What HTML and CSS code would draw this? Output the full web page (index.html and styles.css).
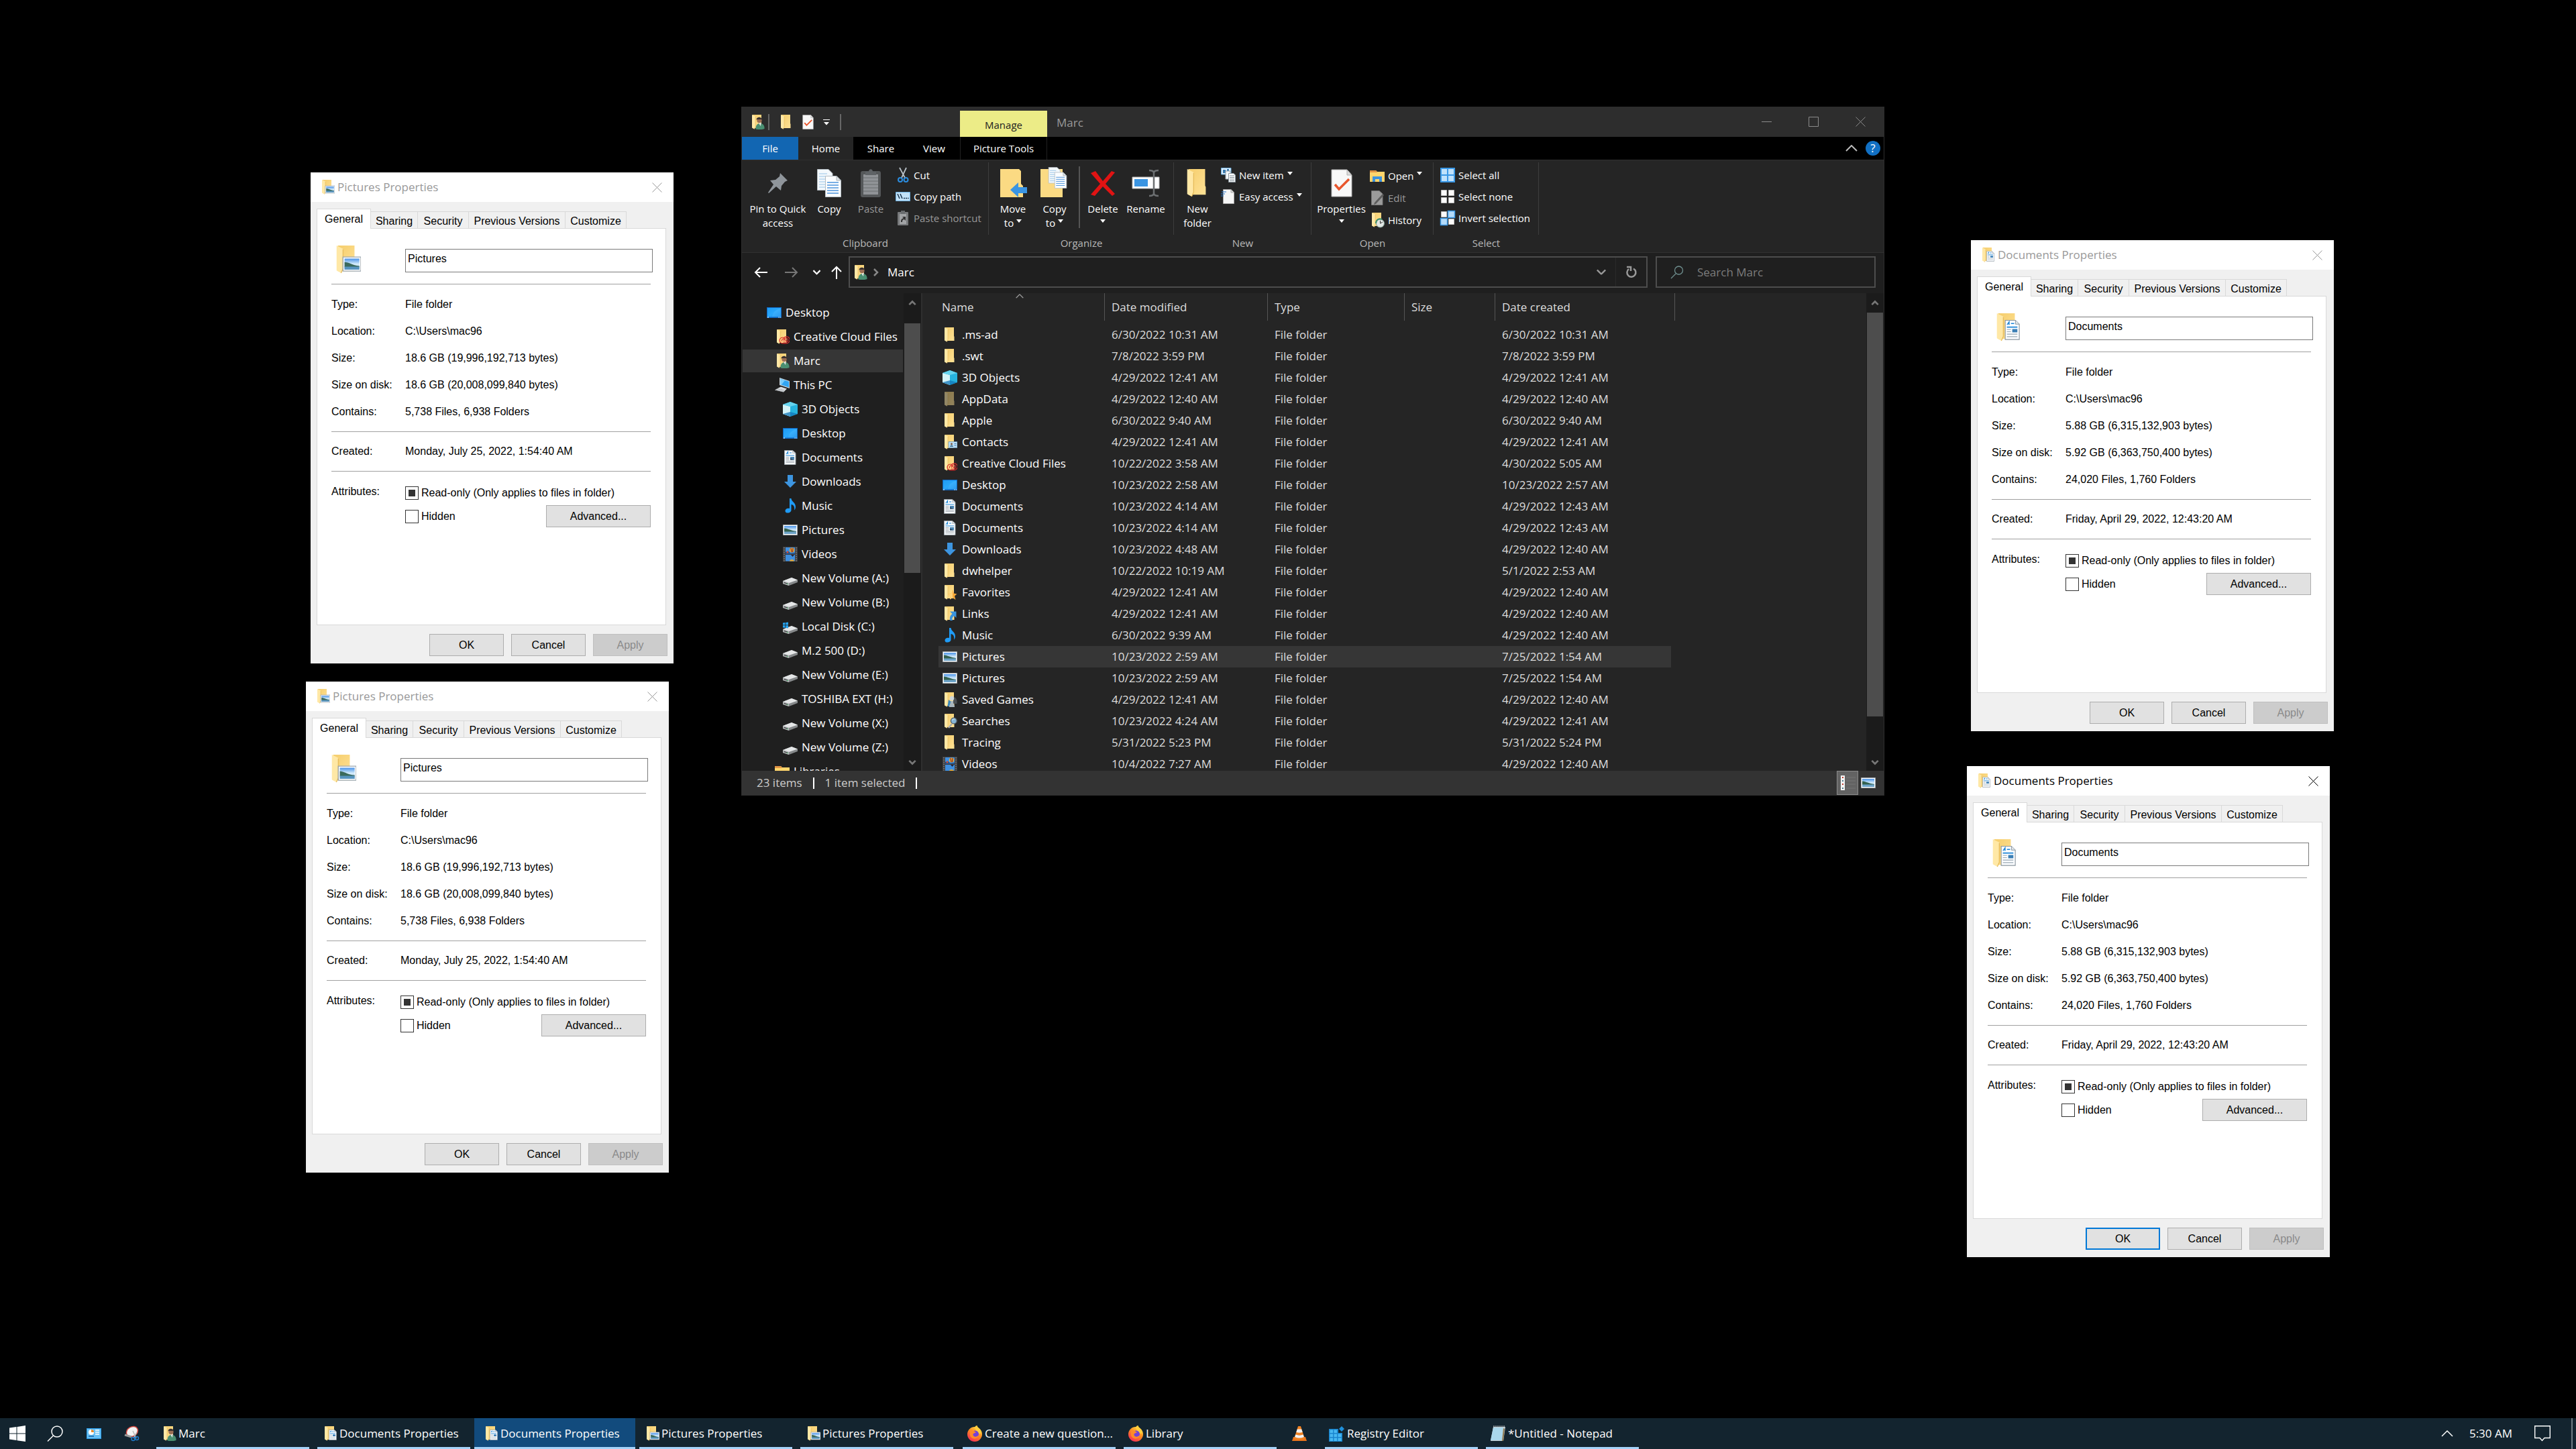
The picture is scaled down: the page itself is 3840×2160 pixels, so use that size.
FILE: index.html
```html
<!DOCTYPE html>
<html lang="en">
<head>
<meta charset="utf-8">
<title>Desktop</title>
<link rel="stylesheet" href="styles.css">
</head>
<body>
<svg class="defs" aria-hidden="true">
  <defs>
    <linearGradient id="g-sky" x1="0" y1="0" x2="0" y2="1"><stop offset="0" stop-color="#4a93e8"/><stop offset=".5" stop-color="#d5ecfb"/><stop offset="1" stop-color="#9cc4ea"/></linearGradient>
    <linearGradient id="g-desk" x1="0" y1="0" x2="1" y2="1"><stop offset="0" stop-color="#1e9bf5"/><stop offset=".5" stop-color="#2aa8fb"/><stop offset="1" stop-color="#1688e6"/></linearGradient>
    <linearGradient id="g-fold" x1="0" y1="0" x2="1" y2="1"><stop offset="0" stop-color="#f5cd6c"/><stop offset="1" stop-color="#ffe296"/></linearGradient>
    <linearGradient id="g-fox" x1=".8" y1="0" x2=".2" y2="1"><stop offset="0" stop-color="#ffe14a"/><stop offset=".45" stop-color="#ff8a1f"/><stop offset="1" stop-color="#f5255c"/></linearGradient>
  </defs>
  <symbol id="folder" viewBox="0 0 22 22"><path d="M4 0H17V13L17.500 14V20H4Z" fill="url(#g-fold)"/><path d="M3 0L8 2.500V18L6.500 21.500L3 19.500Z" fill="#ffe8a6"/><path d="M8 3V18L6.500 21.500" fill="none" stroke="#e3b856" stroke-width=".6"/></symbol>
  <symbol id="o-picture" viewBox="0 0 22 22"><path d="M8 9H22V20H8Z" fill="#fff" stroke="#9aa5ad" stroke-width=".7"/><path d="M9.200 10.200H20.800V18.800H9.200Z" fill="url(#g-sky)"/><path d="M9.200 13C13 13 15 15.500 20.800 16V17H9.200Z" fill="#3b6a5c"/><path d="M9.200 16.500H20.800V18.800H9.200Z" fill="#5794bf"/></symbol>
  <symbol id="o-doc" viewBox="0 0 22 22"><path d="M9.500 5.500H17.500L20.500 8.500V20.500H9.500Z" fill="#fbfdff" stroke="#8b969f" stroke-width=".6"/><path d="M17.500 5.500V8.500H20.500" fill="#dfe5ea" stroke="#8b969f" stroke-width=".5"/><path d="M11 9L12.500 6.800V9M14 8H16.500M10.800 10.800H19" stroke="#1b84d6" stroke-width=".8" fill="none"/><path d="M10.800 12.700H14M10.800 14.400H14M10.800 16.300H19M10.800 18.300H19" stroke="#9aa8b4" stroke-width=".6"/><path d="M15 12.300H19V14.900H15Z" fill="#3c7fb5"/></symbol>
  <symbol id="f-picture" viewBox="0 0 22 22"><use href="#folder"/><use href="#o-picture"/></symbol>
  <symbol id="f-doc" viewBox="0 0 22 22"><use href="#folder"/><use href="#o-doc"/></symbol>
  <symbol id="f-user" viewBox="0 0 22 22"><use href="#folder"/><path d="M8.500 21.500C8 15 12 13 15 13C19 13 22 16 21.500 21C19 22.500 12 22.500 8.500 21.500Z" fill="#4a8f72"/><path d="M13 12L16.500 12L16 17L14.500 15Z" fill="#e8e8e8"/><circle cx="14" cy="8.500" r="3.700" fill="#9c6f55"/><path d="M9.500 7.500C9.500 2.500 18.500 2.500 18 8.500L17 6.800C14 7.500 12 6.500 9.500 7.500Z" fill="#3a3230"/></symbol>
  <symbol id="f-cloud" viewBox="0 0 22 22"><use href="#folder"/><g fill="none" stroke="#d92a2a" stroke-width="1.200"><path d="M12 20.800A4.400 4.400 0 1 1 13.500 12.500A5 5 0 1 1 17 20.800Z"/><path d="M11 18A2.500 2.500 0 0 1 15 15L18.500 18.500"/><path d="M14 17.500A3 3 0 1 1 17 19H12.500"/></g></symbol>
  <symbol id="f-contact" viewBox="0 0 22 22"><use href="#folder"/><path d="M9 10.500H22V19.500H9Z" fill="#bfe0f5" stroke="#6c9cbd" stroke-width=".8"/><path d="M11 18C11 14.500 16 14.500 16 18Z" fill="#467a9c"/><circle cx="13.500" cy="13.700" r="1.500" fill="#7a5a46"/><path d="M17.500 13.500H20.500M17.500 16H20.500" stroke="#3d7cb0"/></symbol>
  <symbol id="f-star" viewBox="0 0 22 22"><use href="#folder"/><path d="M15 7L16.800 12.500L21.500 13.500L18 16.500L19.500 22L15 19L11 21.500L11.800 16.500L8 13L13.200 12.500Z" fill="#f7a83a"/><path d="M15 7L15 19L11 21.500L11.800 16.500L8 13L13.200 12.500Z" fill="#ffd27a"/></symbol>
  <symbol id="f-link" viewBox="0 0 22 22"><use href="#folder"/><path d="M11 7.500H20.500V17L17.500 14C14.500 16 14 18 15 21H11.500C10 16.500 11.500 13.500 14.500 11Z" fill="#3a95df"/></symbol>
  <symbol id="f-game" viewBox="0 0 22 22"><use href="#folder"/><path d="M16 7C21 7 22 13 21.500 17H16Z" fill="#4b4f52"/><path d="M9 11L13 14L10 21H7.500Z" fill="#3a87ba"/><path d="M10 22C9.500 19 12.500 18 12 13H16C15.500 18 18.500 19 18 22Z" fill="#a9b6bd"/><circle cx="14" cy="9" r="3.200" fill="#ccd6da"/></symbol>
  <symbol id="f-search" viewBox="0 0 22 22"><use href="#folder"/><path d="M14 15L9 21" stroke="#a9adb0" stroke-width="2.400"/><circle cx="16.800" cy="10.500" r="4.400" fill="#86b5d6" stroke="#55646e" stroke-width="1.400"/><path d="M14.500 10C15 8 17 7.500 18.500 8" stroke="#d7ecfa" fill="none"/></symbol>
  <symbol id="cube" viewBox="0 0 22 22"><path d="M11 0L22 4V18L11 22L0 18V4Z" fill="#27b3de"/><path d="M0 4L11 7V22L0 18Z" fill="#d4f3f8"/><path d="M11 0L22 4L11 7L0 4Z" fill="#65d3ee"/><path d="M0 18L11 15L22 18L11 22Z" fill="#1175b8" opacity=".75"/></symbol>
  <symbol id="desktop" viewBox="0 0 22 22"><path d="M0 3H22V19H0Z" fill="#0f66c0"/><path d="M1 4H21V17.500H1Z" fill="url(#g-desk)"/><path d="M8 17C9 10 14 6 21 5V17Z" fill="#55bdff" opacity=".35"/><path d="M1 18H3M17.500 18H19M20 18H21" stroke="#fff"/></symbol>
  <symbol id="doc" viewBox="0 0 22 22"><path d="M2.500 .5H14.500L19 4.500V21.500H2.500Z" fill="#f8fbfd" stroke="#9ba3a9"/><path d="M14.500 .5V4.500H19Z" fill="#dde3e8" stroke="#9ba3a9" stroke-width=".6"/><path d="M5 6L7.500 2.500V6M10 4H13M4.500 8H17" stroke="#1d88d8" fill="none" stroke-width="1.200"/><path d="M4.500 10.500H9.500M4.500 12.500H9.500M4.500 14.500H9.500M4.500 16.500H17M4.500 18.500H17" stroke="#9099a0" stroke-width=".8"/><path d="M11 10H17V14.500H11Z" fill="#4a86b4"/><path d="M11 12L17 14.500H11Z" fill="#253f57"/></symbol>
  <symbol id="download" viewBox="0 0 22 22"><path d="M7 1H15V11H20L11 20L2 11H7Z" fill="#3d95e0"/></symbol>
  <symbol id="music" viewBox="0 0 22 22"><path d="M10 0H12.500C13 5 19 6 19 12.500C19 15 18 16.500 17 17.500C18 12 15.500 9.500 12.500 9V17.500C12.500 22 3.500 23.500 3.500 18.500C3.500 15 7.500 14 10 15Z" fill="#1f9bf5"/></symbol>
  <symbol id="picture" viewBox="0 0 22 22"><path d="M.5 3.500H21.500V18.500H.5Z" fill="#fff" stroke="#a4abb0"/><path d="M2 5H20V17H2Z" fill="url(#g-sky)"/><path d="M2 8.500C8 9 12 12 20 13V14H2Z" fill="#33614f"/><path d="M2 13.500H20V17H2Z" fill="#6da3c8"/></symbol>
  <symbol id="video" viewBox="0 0 22 22"><path d="M0 0H22V22H0Z" fill="#3f3f41"/><path d="M4 1H18V10.500H4ZM4 12H18V21.500H4Z" fill="#3f8fdf"/><path d="M4 8L8 6.500L11 9.500L18 9V10.500H4Z" fill="#1c4f8d"/><circle cx="13.500" cy="5" r="3.600" fill="#e8ab35"/><path d="M12 2L13 8M15 2L14.500 8" stroke="#8e2d25" stroke-width="1.200"/><circle cx="7" cy="8" r="1.500" fill="#e04e2f"/><path d="M10 21.500C10 18 17 18 17 21.500Z" fill="#e8ab35"/><path d="M12 12H17L14.500 15Z" fill="#2a2430"/><path d="M2 1V22M20 1V22" stroke="#8a8a8a" stroke-width="1.400" stroke-dasharray="1.500 1.700"/></symbol>
  <symbol id="drive" viewBox="0 0 22 22"><path d="M0 15L13 10L22 13.500V17L9 22L0 19Z" fill="#85888a"/><path d="M0 15L13 10L22 13.500L9 18Z" fill="#e4e6e7"/><path d="M0 15L9 18V22L0 19Z" fill="#b7babb"/><path d="M1.500 16.700L7.500 18.700V20L1.500 18Z" fill="#34383a"/><path d="M6 19h1.500v1H6Z" fill="#3fbf65"/></symbol>
  <symbol id="drive-c" viewBox="0 0 22 22"><use href="#drive"/><path d="M0 5.500L3.500 5V8.500H0ZM4.300 5L8 4.500V8.500H4.300ZM0 9.300H3.500V13L0 12.500ZM4.300 9.300H8V13.500L4.300 13Z" fill="#27a5f2"/></symbol>
  <symbol id="pc" viewBox="0 0 22 22"><path d="M7 0L22 5V16L7 11Z" fill="#c8d3da"/><path d="M8 1.500L21 5.800V14.500L8 10Z" fill="#31a5f3"/><path d="M8 1.500L15 4L10 10.500L8 10Z" fill="#7cccfa"/><path d="M4 16L9 13.500L18 16.500L13 21.500L0 18.500Z" fill="#dadde0"/><path d="M2 18L13 21M4 16.500L14 19" stroke="#868c91" stroke-dasharray="1.500 1"/></symbol>
  <symbol id="library" viewBox="0 0 22 22"><path d="M0 3H9L11 5H22V20H0Z" fill="#ffd56c"/><path d="M0 3H9L11 6H0Z" fill="#e09345"/><path d="M4 12H18V20H14V16H8V20H4Z" fill="#3c92dd"/></symbol>
  <symbol id="check-doc" viewBox="0 0 32 42"><path d="M1 1H24L31 9V41H1Z" fill="#f8f8f8" stroke="#b8b8b8"/><path d="M24 1V9H31Z" fill="#ddd" stroke="#b0b0b0"/><path d="M6 23L12 30L27 15" fill="none" stroke="#e8562d" stroke-width="3.500"/></symbol>
  <symbol id="pages" viewBox="0 0 36 42"><path d="M.5 .5H17L23 6.500V31.500H.5Z" fill="#f3f8fc" stroke="#b4bcc2"/><path d="M3 7H15M3 11H20M3 15H20M3 19H20M3 23H20M3 27H20" stroke="#98c4e6" stroke-width="1.200"/><path d="M12.500 10.500H29L35.500 17V41.500H12.500Z" fill="#fbfdff" stroke="#b4bcc2"/><path d="M29 10.500V17H35.500Z" fill="#dde4e9" stroke="#a9b1b6"/><path d="M15 20H32M15 24H32M15 28H32M15 32H32M15 36H32" stroke="#4d94db" stroke-width="1.300"/></symbol>
  <symbol id="caret" viewBox="0 0 8 5"><path d="M0 0H8L4 5Z" fill="#fff"/></symbol>
  <symbol id="close" viewBox="0 0 15 15"><path d="M.5 .5L14.500 14.500M14.500 .5L.5 14.500" stroke="currentColor" fill="none"/></symbol>
  <symbol id="chev-up" viewBox="0 0 18 10"><path d="M1 9L9 1L17 9" stroke="currentColor" stroke-width="2" fill="none"/></symbol>
  <symbol id="chev-down" viewBox="0 0 18 10"><path d="M1 1L9 9L17 1" stroke="currentColor" stroke-width="3" fill="none"/></symbol>
  <symbol id="firefox" viewBox="0 0 24 24"><circle cx="12" cy="13" r="11" fill="url(#g-fox)"/><path d="M12 3C13 0 15 0 15.500 0C16 3 21 5 22 10C20 16 14 8 12 3Z" fill="#ffcf3f"/><circle cx="12.500" cy="13" r="5.500" fill="#7341d8"/><path d="M5 7C9 6 11 9 14 10C12 12 9 11 9.500 14C10 17 15 18 18 14C17 22 6 21 5 14Z" fill="#ff8b28"/></symbol>
</svg>

<main class="desktop">

  <section class="explorer" aria-label="File Explorer">
    <header class="titlebar">
      <div class="qat">
        <svg class="i22"><use href="#f-user"/></svg><span class="qsep"></span>
        <svg class="i22"><use href="#folder"/></svg>
        <svg class="qdoc"><use href="#check-doc"/></svg>
        <svg class="qmenu" viewBox="0 0 10 9"><path d="M0 .5H10" stroke="#fff"/><path d="M1 4H9L5 8.500Z" fill="#fff"/></svg>
        <span class="qsep last"></span>
      </div>
      <span class="manage">Manage</span>
      <h1 class="win-title">Marc</h1>
      <div class="win-controls">
        <button aria-label="Minimize"><svg viewBox="0 0 15 15"><path d="M0 7.500H15" stroke="currentColor"/></svg></button>
        <button aria-label="Maximize"><svg viewBox="0 0 15 15"><path d="M.5 .5H14.500V14.500H.5Z" stroke="currentColor" fill="none"/></svg></button>
        <button aria-label="Close"><svg><use href="#close"/></svg></button>
      </div>
    </header>

    <nav class="ribbon-tabs" aria-label="Ribbon tabs">
      <button class="tab-file">File</button>
      <button class="tab-home">Home</button>
      <button class="tab-share">Share</button>
      <button class="tab-view">View</button>
      <button class="tab-tools">Picture Tools</button>
      <button class="collapse" aria-label="Minimize the Ribbon"><svg viewBox="0 0 18 10"><use href="#chev-up"/></svg></button>
      <button class="help" aria-label="Help">?</button>
    </nav>

    <div class="ribbon">
      <div class="group g-clip">
        <div class="tools">
          <button class="big w96"><svg viewBox="0 0 42 42"><path d="M24 6L35 17L31 19L26 25L25 32L18 26L7 36L6 35L14 23L9 17L17 16L23 11Z" fill="#8f959b"/></svg>Pin to Quick<br>access</button>
          <button class="big w56"><svg><use href="#pages"/></svg>Copy</button>
          <button class="big w68 off"><svg viewBox="0 0 32 42"><rect x="1" y="3" width="30" height="39" rx="3" fill="#55585a"/><path d="M5 8H27V38H5Z" fill="#909397"/><path d="M5 13H27M5 18H27M5 23H27M5 28H27M5 33H27" stroke="#6b6e71"/><path d="M8 9V4H13C13-1 19-1 19 4H24V9Z" fill="#5f6366"/></svg>Paste</button>
          <div class="small-col">
            <button class="small"><svg viewBox="0 0 22 22"><path d="M6 0L14 15M16 0L9 15" stroke="#b9c2c9" stroke-width="1.800"/><circle cx="7" cy="18" r="3" fill="none" stroke="#2b8de0" stroke-width="2"/><circle cx="15.500" cy="18" r="3" fill="none" stroke="#2b8de0" stroke-width="2"/></svg>Cut</button>
            <button class="small"><svg viewBox="0 0 22 22"><path d="M.5 4.500H21.500V17.500H.5Z" fill="#c3e2f8" stroke="#6eb1e1"/><path d="M3 7L6 14M7 7L10 14M12 13.500H14M15 13.500H17M18 13.500H19.500" stroke="#173149" stroke-width="1.500"/></svg>Copy path</button>
            <button class="small off"><svg viewBox="0 0 22 22"><rect x="3" y="2" width="16" height="20" rx="1" fill="#77797b"/><path d="M6 5H16V20H6Z" fill="#a2a4a6"/><path d="M8 0H14V5H8Z" fill="#696c6e"/><path d="M8 17C8 12 10 12 12 11L10 9H15V15L13 13C11 13 10 14 10 17Z" fill="#333"/></svg>Paste shortcut</button>
          </div>
        </div>
        <h2>Clipboard</h2>
      </div>
      <div class="group g-org">
        <div class="tools">
          <button class="big w62"><svg viewBox="-2 0 42 42"><path d="M0 0H28L31 3V22L34 25V42H0Z" fill="#fbda83"/><path d="M15 31L27 20V27H40V36H27V42Z" fill="#3b95e2"/></svg>Move<span>to<svg class="car"><use href="#caret"/></svg></span></button>
          <button class="big w62"><svg viewBox="0 3 42 42"><path d="M0 3H33V45H0Z" fill="#fbda83"/><use href="#pages" x="11" y="0" width="29" height="32"/></svg>Copy<span>to<svg class="car"><use href="#caret"/></svg></span></button>
          <i class="vsep"></i>
          <button class="big w58"><svg viewBox="0 0 42 42"><path d="M3 6L10 3L21 18L34 3L39 5L25 22L39 37L35 40L21 26L9 40L3 38L17 22Z" fill="#e01313"/></svg>Delete<span><svg class="car solo"><use href="#caret"/></svg></span></button>
          <button class="big w70"><svg viewBox="0 0 42 42"><path d="M1 12H41V29H1Z" fill="#fdfdfd" stroke="#bbb"/><path d="M4 15H24V26H4Z" fill="#3b95e2"/><path d="M26 2C30 2 33 3 33 6V36C33 39 30 40 26 40M40 2C36 2 33 3 33 6M33 36C33 39 36 40 40 40" stroke="#6c6f71" stroke-width="2.500" fill="none"/></svg>Rename</button>
        </div>
        <h2>Organize</h2>
      </div>
      <div class="group g-new">
        <div class="tools">
          <button class="big w60"><svg viewBox="0 0 22 22"><use href="#folder"/></svg>New<br>folder</button>
          <div class="small-col inset">
            <button class="small"><svg viewBox="0 0 22 22"><path d="M.5 .5H15V10H.5Z" fill="#dff0fc" stroke="#6eb1e1"/><path d="M3 3H7V8H3ZM9 2H12V5H9Z" fill="#3b7cb0"/><path d="M7 5H14V17H7Z" fill="#f4f8fb" stroke="#98a4ad"/><path d="M11.500 8.500H19L21.500 11V21.500H11.500Z" fill="#fdfdfd" stroke="#8a969f"/><path d="M13 12H20M13 14.500H20M13 17H20M13 19.500H20" stroke="#7f8d97"/></svg>New item<svg class="car"><use href="#caret"/></svg></button>
            <button class="small"><svg viewBox="0 0 22 22"><path d="M3.500 .5H15L19.500 5V21.500H3.500Z" fill="#f6f6f6" stroke="#a8a8a8"/><path d="M15 .5V5H19.500" fill="#ddd" stroke="#a8a8a8"/><path d="M1 4H8M0 7H6M0 10H4" stroke="#2b7bd0" stroke-width="1.200"/></svg>Easy access<svg class="car"><use href="#caret"/></svg></button>
          </div>
        </div>
        <h2>New</h2>
      </div>
      <div class="group g-open">
        <div class="tools">
          <button class="big w80"><svg><use href="#check-doc"/></svg>Properties<span><svg class="car solo"><use href="#caret"/></svg></span></button>
          <div class="small-col loose">
            <button class="small"><svg><use href="#library"/></svg>Open<svg class="car"><use href="#caret"/></svg></button>
            <button class="small off"><svg viewBox="0 0 22 22"><path d="M2.500 .5H14L19 5V21.500H2.500Z" fill="#9b9b9b" stroke="#777"/><path d="M7 18L19 5L21 7L9 20L6 21Z" fill="#5c5c5c"/></svg>Edit</button>
            <button class="small"><svg viewBox="0 0 22 22"><use href="#folder"/><circle cx="15.500" cy="16" r="6" fill="#e1e6e4" stroke="#7f9b90"/><path d="M15.500 12V16L19 14" stroke="#333" fill="none"/><path d="M9 16C9 10 14 8 18 10" stroke="#3d8f6b" stroke-width="2" fill="none"/></svg>History</button>
          </div>
        </div>
        <h2>Open</h2>
      </div>
      <div class="group g-select">
        <div class="tools">
          <div class="small-col inset">
            <button class="small"><svg viewBox="0 0 22 22"><path d="M0 0H22V22H0Z" fill="#3a98e6"/><path d="M2 2H10V10H2ZM12 2H20V10H12ZM2 12H10V20H2ZM12 12H20V20H12Z" fill="#bfe1fb"/></svg>Select all</button>
            <button class="small"><svg viewBox="0 0 22 22"><path d="M1.500 1.500H9.500V9.500H1.500ZM12.500 1.500H20.500V9.500H12.500ZM1.500 12.500H9.500V20.500H1.500ZM12.500 12.500H20.500V20.500H12.500Z" fill="#fafafa" stroke="#bdbdbd"/></svg>Select none</button>
            <button class="small"><svg viewBox="0 0 22 22"><path d="M1.500 1.500H9.500V9.500H1.500ZM12.500 12.500H20.500V20.500H12.500Z" fill="#fafafa" stroke="#bdbdbd"/><path d="M11.500 .5H21.500V10.500H11.500ZM.5 11.500H10.500V21.500H.5Z" fill="#b4dbfa" stroke="#3a98e6" stroke-width="1.500"/></svg>Invert selection</button>
          </div>
        </div>
        <h2>Select</h2>
      </div>
    </div>

    <div class="address-row">
      <button aria-label="Back" class="nb"><svg viewBox="0 0 20 20"><path d="M20 10H2M9 3L2 10L9 17" fill="none" stroke="#fff" stroke-width="2"/></svg></button>
      <button aria-label="Forward" class="nb"><svg viewBox="0 0 20 20"><path d="M0 10H18M11 3L18 10L11 17" fill="none" stroke="#777" stroke-width="2"/></svg></button>
      <button aria-label="Recent locations" class="nb rec"><svg viewBox="0 0 18 10"><path d="M2 1L9 8L16 1" fill="none" stroke="#fff" stroke-width="3"/></svg></button>
      <button aria-label="Up" class="nb up"><svg viewBox="0 0 20 20"><path d="M10 20V2M3 9L10 2L17 9" fill="none" stroke="#fff" stroke-width="2"/></svg></button>
      <div class="address">
        <svg class="i22"><use href="#f-user"/></svg>
        <svg class="crumb" viewBox="0 0 8 12"><path d="M1 1L6 6L1 11" fill="none" stroke="#888" stroke-width="2.500"/></svg>
        <span>Marc</span>
        <button class="drop" aria-label="Previous locations"><svg viewBox="0 0 18 10"><use href="#chev-down"/></svg></button>
        <button class="refresh" aria-label="Refresh"><svg viewBox="0 0 18 18"><path d="M12 3.500A6.500 6.500 0 1 1 5 4" fill="none" stroke="#999" stroke-width="2.500"/><path d="M2 1H8V7" fill="none" stroke="#999" stroke-width="2.500"/></svg></button>
      </div>
      <label class="search">
        <svg viewBox="0 0 20 20"><circle cx="12.500" cy="7" r="6" fill="none" stroke="#6f8f8f" stroke-width="1.300"/><path d="M8 12L1 19" stroke="#6f8f8f" stroke-width="1.300"/></svg>
        <input type="search" placeholder="Search Marc" aria-label="Search Marc">
      </label>
    </div>

    <div class="panes">
      <div class="nav-pane">
        <ul class="tree">
          <li class="l0"><svg><use href="#desktop"/></svg>Desktop</li>
          <li class="l1"><svg><use href="#f-cloud"/></svg>Creative Cloud Files</li>
          <li class="l1 current"><svg><use href="#f-user"/></svg>Marc</li>
          <li class="l1"><svg><use href="#pc"/></svg>This PC</li>
          <li class="l2"><svg><use href="#cube"/></svg>3D Objects</li>
          <li class="l2"><svg><use href="#desktop"/></svg>Desktop</li>
          <li class="l2"><svg><use href="#doc"/></svg>Documents</li>
          <li class="l2"><svg><use href="#download"/></svg>Downloads</li>
          <li class="l2"><svg><use href="#music"/></svg>Music</li>
          <li class="l2"><svg><use href="#picture"/></svg>Pictures</li>
          <li class="l2"><svg><use href="#video"/></svg>Videos</li>
          <li class="l2"><svg><use href="#drive"/></svg>New Volume (A:)</li>
          <li class="l2"><svg><use href="#drive"/></svg>New Volume (B:)</li>
          <li class="l2"><svg><use href="#drive-c"/></svg>Local Disk (C:)</li>
          <li class="l2"><svg><use href="#drive"/></svg>M.2 500 (D:)</li>
          <li class="l2"><svg><use href="#drive"/></svg>New Volume (E:)</li>
          <li class="l2"><svg><use href="#drive"/></svg>TOSHIBA EXT (H:)</li>
          <li class="l2"><svg><use href="#drive"/></svg>New Volume (X:)</li>
          <li class="l2"><svg><use href="#drive"/></svg>New Volume (Z:)</li>
          <li class="l1"><svg><use href="#library"/></svg>Libraries</li>
        </ul>
        <div class="scroll nav-scroll"><svg viewBox="0 0 18 10"><path d="M2 9L9 2L16 9" stroke="#777" stroke-width="4" fill="none"/></svg><i></i><svg class="dn" viewBox="0 0 18 10"><path d="M2 1L9 8L16 1" stroke="#777" stroke-width="4" fill="none"/></svg></div>
      </div>
      <div class="list-pane">
        <table class="files">
          <colgroup><col class="c-name"><col class="c-mod"><col class="c-type"><col class="c-size"><col class="c-created"></colgroup>
          <thead><tr><th><span>Name<svg class="sort" viewBox="0 0 18 10"><use href="#chev-up"/></svg></span></th><th><span>Date modified</span></th><th><span>Type</span></th><th><span>Size</span></th><th><span class="wide">Date created</span></th></tr></thead>
          <tbody>
            <tr><td><svg><use href="#folder"/></svg>.ms-ad</td><td>6/30/2022 10:31 AM</td><td>File folder</td><td></td><td>6/30/2022 10:31 AM</td></tr>
            <tr><td><svg><use href="#folder"/></svg>.swt</td><td>7/8/2022 3:59 PM</td><td>File folder</td><td></td><td>7/8/2022 3:59 PM</td></tr>
            <tr><td><svg><use href="#cube"/></svg>3D Objects</td><td>4/29/2022 12:41 AM</td><td>File folder</td><td></td><td>4/29/2022 12:41 AM</td></tr>
            <tr><td><svg class="faded"><use href="#folder"/></svg>AppData</td><td>4/29/2022 12:40 AM</td><td>File folder</td><td></td><td>4/29/2022 12:40 AM</td></tr>
            <tr><td><svg><use href="#folder"/></svg>Apple</td><td>6/30/2022 9:40 AM</td><td>File folder</td><td></td><td>6/30/2022 9:40 AM</td></tr>
            <tr><td><svg><use href="#f-contact"/></svg>Contacts</td><td>4/29/2022 12:41 AM</td><td>File folder</td><td></td><td>4/29/2022 12:41 AM</td></tr>
            <tr><td><svg><use href="#f-cloud"/></svg>Creative Cloud Files</td><td>10/22/2022 3:58 AM</td><td>File folder</td><td></td><td>4/30/2022 5:05 AM</td></tr>
            <tr><td><svg><use href="#desktop"/></svg>Desktop</td><td>10/23/2022 2:58 AM</td><td>File folder</td><td></td><td>10/23/2022 2:57 AM</td></tr>
            <tr><td><svg><use href="#doc"/></svg>Documents</td><td>10/23/2022 4:14 AM</td><td>File folder</td><td></td><td>4/29/2022 12:43 AM</td></tr>
            <tr><td><svg><use href="#doc"/></svg>Documents</td><td>10/23/2022 4:14 AM</td><td>File folder</td><td></td><td>4/29/2022 12:43 AM</td></tr>
            <tr><td><svg><use href="#download"/></svg>Downloads</td><td>10/23/2022 4:48 AM</td><td>File folder</td><td></td><td>4/29/2022 12:40 AM</td></tr>
            <tr><td><svg><use href="#folder"/></svg>dwhelper</td><td>10/22/2022 10:19 AM</td><td>File folder</td><td></td><td>5/1/2022 2:53 AM</td></tr>
            <tr><td><svg><use href="#f-star"/></svg>Favorites</td><td>4/29/2022 12:41 AM</td><td>File folder</td><td></td><td>4/29/2022 12:40 AM</td></tr>
            <tr><td><svg><use href="#f-link"/></svg>Links</td><td>4/29/2022 12:41 AM</td><td>File folder</td><td></td><td>4/29/2022 12:40 AM</td></tr>
            <tr><td><svg><use href="#music"/></svg>Music</td><td>6/30/2022 9:39 AM</td><td>File folder</td><td></td><td>4/29/2022 12:40 AM</td></tr>
            <tr class="selected"><td><svg><use href="#picture"/></svg>Pictures</td><td>10/23/2022 2:59 AM</td><td>File folder</td><td></td><td>7/25/2022 1:54 AM</td></tr>
            <tr><td><svg><use href="#picture"/></svg>Pictures</td><td>10/23/2022 2:59 AM</td><td>File folder</td><td></td><td>7/25/2022 1:54 AM</td></tr>
            <tr><td><svg><use href="#f-game"/></svg>Saved Games</td><td>4/29/2022 12:41 AM</td><td>File folder</td><td></td><td>4/29/2022 12:40 AM</td></tr>
            <tr><td><svg><use href="#f-search"/></svg>Searches</td><td>10/23/2022 4:24 AM</td><td>File folder</td><td></td><td>4/29/2022 12:41 AM</td></tr>
            <tr><td><svg><use href="#folder"/></svg>Tracing</td><td>5/31/2022 5:23 PM</td><td>File folder</td><td></td><td>5/31/2022 5:24 PM</td></tr>
            <tr><td><svg><use href="#video"/></svg>Videos</td><td>10/4/2022 7:27 AM</td><td>File folder</td><td></td><td>4/29/2022 12:40 AM</td></tr>
          </tbody>
        </table>
        <div class="scroll list-scroll"><svg viewBox="0 0 18 10"><path d="M2 9L9 2L16 9" stroke="#777" stroke-width="4" fill="none"/></svg><i></i><svg class="dn" viewBox="0 0 18 10"><path d="M2 1L9 8L16 1" stroke="#777" stroke-width="4" fill="none"/></svg></div>
      </div>
    </div>

    <footer class="status">
      <span>23 items</span><i></i><span>1 item selected</span><i></i>
      <div class="views">
        <button class="on" aria-label="Details view"><svg viewBox="0 0 32 34"><path d="M6 6H12V28H6Z" fill="#f3f3f3"/><path d="M8 9H10M8 19H10" stroke="#c03a2b" stroke-width="2"/><path d="M8 14H10M8 25H10" stroke="#4b7a8c" stroke-width="2"/><path d="M14 9H28M14 14H28M14 19H28M14 25H28" stroke="#777"/></svg></button>
        <button aria-label="Large icons view"><svg class="i22"><use href="#picture"/></svg></button>
      </div>
    </footer>
  </section>

  <section class="dialog d1">
    <header><svg class="i22"><use href="#f-picture"/></svg><h2>Pictures Properties</h2><button class="x" aria-label="Close"><svg><use href="#close"/></svg></button></header>
    <div class="tabs"><button class="on">General</button><button class="t-sh">Sharing</button><button class="t-se">Security</button><button class="t-pv">Previous Versions</button><button class="t-cu">Customize</button></div>
    <div class="page">
      <div class="name-row"><svg><use href="#f-picture"/></svg><input type="text" value="Pictures" aria-label="Folder name"></div>
      <dl><dt>Type:</dt><dd>File folder</dd><dt>Location:</dt><dd>C:\Users\mac96</dd><dt>Size:</dt><dd>18.6 GB (19,996,192,713 bytes)</dd><dt>Size on disk:</dt><dd>18.6 GB (20,008,099,840 bytes)</dd><dt>Contains:</dt><dd>5,738 Files, 6,938 Folders</dd></dl>
      <dl><dt>Created:</dt><dd>Monday, July 25, 2022, 1:54:40 AM</dd></dl>
      <div class="attrs"><span>Attributes:</span><div><label><input type="checkbox" class="partial">Read-only (Only applies to files in folder)</label><div class="hid"><label><input type="checkbox">Hidden</label><button class="btn adv">Advanced...</button></div></div></div>
    </div>
    <footer><button class="btn">OK</button><button class="btn">Cancel</button><button class="btn" disabled>Apply</button></footer>
  </section>

  <section class="dialog d2">
    <header><svg class="i22"><use href="#f-picture"/></svg><h2>Pictures Properties</h2><button class="x" aria-label="Close"><svg><use href="#close"/></svg></button></header>
    <div class="tabs"><button class="on">General</button><button class="t-sh">Sharing</button><button class="t-se">Security</button><button class="t-pv">Previous Versions</button><button class="t-cu">Customize</button></div>
    <div class="page">
      <div class="name-row"><svg><use href="#f-picture"/></svg><input type="text" value="Pictures" aria-label="Folder name"></div>
      <dl><dt>Type:</dt><dd>File folder</dd><dt>Location:</dt><dd>C:\Users\mac96</dd><dt>Size:</dt><dd>18.6 GB (19,996,192,713 bytes)</dd><dt>Size on disk:</dt><dd>18.6 GB (20,008,099,840 bytes)</dd><dt>Contains:</dt><dd>5,738 Files, 6,938 Folders</dd></dl>
      <dl><dt>Created:</dt><dd>Monday, July 25, 2022, 1:54:40 AM</dd></dl>
      <div class="attrs"><span>Attributes:</span><div><label><input type="checkbox" class="partial">Read-only (Only applies to files in folder)</label><div class="hid"><label><input type="checkbox">Hidden</label><button class="btn adv">Advanced...</button></div></div></div>
    </div>
    <footer><button class="btn">OK</button><button class="btn">Cancel</button><button class="btn" disabled>Apply</button></footer>
  </section>

  <section class="dialog d3">
    <header><svg class="i22"><use href="#f-doc"/></svg><h2>Documents Properties</h2><button class="x" aria-label="Close"><svg><use href="#close"/></svg></button></header>
    <div class="tabs"><button class="on">General</button><button class="t-sh">Sharing</button><button class="t-se">Security</button><button class="t-pv">Previous Versions</button><button class="t-cu">Customize</button></div>
    <div class="page">
      <div class="name-row"><svg><use href="#f-doc"/></svg><input type="text" value="Documents" aria-label="Folder name"></div>
      <dl><dt>Type:</dt><dd>File folder</dd><dt>Location:</dt><dd>C:\Users\mac96</dd><dt>Size:</dt><dd>5.88 GB (6,315,132,903 bytes)</dd><dt>Size on disk:</dt><dd>5.92 GB (6,363,750,400 bytes)</dd><dt>Contains:</dt><dd>24,020 Files, 1,760 Folders</dd></dl>
      <dl><dt>Created:</dt><dd>Friday, April 29, 2022, 12:43:20 AM</dd></dl>
      <div class="attrs"><span>Attributes:</span><div><label><input type="checkbox" class="partial">Read-only (Only applies to files in folder)</label><div class="hid"><label><input type="checkbox">Hidden</label><button class="btn adv">Advanced...</button></div></div></div>
    </div>
    <footer><button class="btn">OK</button><button class="btn">Cancel</button><button class="btn" disabled>Apply</button></footer>
  </section>

  <section class="dialog d4 active">
    <header><svg class="i22"><use href="#f-doc"/></svg><h2>Documents Properties</h2><button class="x" aria-label="Close"><svg><use href="#close"/></svg></button></header>
    <div class="tabs"><button class="on">General</button><button class="t-sh">Sharing</button><button class="t-se">Security</button><button class="t-pv">Previous Versions</button><button class="t-cu">Customize</button></div>
    <div class="page">
      <div class="name-row"><svg><use href="#f-doc"/></svg><input type="text" value="Documents" aria-label="Folder name"></div>
      <dl><dt>Type:</dt><dd>File folder</dd><dt>Location:</dt><dd>C:\Users\mac96</dd><dt>Size:</dt><dd>5.88 GB (6,315,132,903 bytes)</dd><dt>Size on disk:</dt><dd>5.92 GB (6,363,750,400 bytes)</dd><dt>Contains:</dt><dd>24,020 Files, 1,760 Folders</dd></dl>
      <dl><dt>Created:</dt><dd>Friday, April 29, 2022, 12:43:20 AM</dd></dl>
      <div class="attrs"><span>Attributes:</span><div><label><input type="checkbox" class="partial">Read-only (Only applies to files in folder)</label><div class="hid"><label><input type="checkbox">Hidden</label><button class="btn adv">Advanced...</button></div></div></div>
    </div>
    <footer><button class="btn default">OK</button><button class="btn">Cancel</button><button class="btn" disabled>Apply</button></footer>
  </section>
</main>

<footer class="taskbar">
  <button class="pin" aria-label="Start"><svg viewBox="0 0 24 24"><path d="M0 3.500L10.500 2V11.500H0ZM11.500 1.900L24 0V11.500H11.500ZM0 12.500H10.500V22L0 20.500ZM11.500 12.500H24V24L11.500 22.200Z" fill="#fff"/></svg></button>
  <button class="pin" aria-label="Search"><svg viewBox="0 0 24 24"><circle cx="15" cy="9" r="8" fill="none" stroke="#fff" stroke-width="1.500"/><path d="M9.500 15L1 23.500" stroke="#fff" stroke-width="1.500"/></svg></button>
  <button class="pin" aria-label="Control Panel"><svg viewBox="0 0 24 24"><path d="M1 4H23V20H1Z" fill="#2d9de8"/><path d="M2 5H22V19H2Z" fill="#67c0f5"/><circle cx="8" cy="10" r="4" fill="#fff"/><path d="M8 10V6A4 4 0 0 1 12 10Z" fill="#e78b2d"/><path d="M14 7H20M14 10H20M14 13H20" stroke="#fff" stroke-width="1.500"/><path d="M4 16H12" stroke="#1463a8" stroke-width="1.500"/></svg></button>
  <button class="pin" aria-label="Snipping Tool"><svg viewBox="0 0 24 24"><ellipse cx="13" cy="9" rx="9" ry="7" transform="rotate(-30 13 9)" fill="#f3f3f3" stroke="#d5453c" stroke-width="1.500"/><path d="M2 14L12 17" stroke="#999" stroke-width="3"/><path d="M14 8L19 19M20 10L15 19" stroke="#bbb" stroke-width="1.500"/><circle cx="14.500" cy="20" r="2.500" fill="none" stroke="#1e78c8" stroke-width="1.500"/><circle cx="20" cy="19" r="2.500" fill="none" stroke="#1e78c8" stroke-width="1.500"/></svg></button>
  <button class="task"><svg><use href="#f-user"/></svg>Marc</button>
  <button class="task"><svg><use href="#f-doc"/></svg>Documents Properties</button>
  <button class="task current"><svg><use href="#f-doc"/></svg>Documents Properties</button>
  <button class="task"><svg><use href="#f-picture"/></svg>Pictures Properties</button>
  <button class="task"><svg><use href="#f-picture"/></svg>Pictures Properties</button>
  <button class="task tight"><svg><use href="#firefox"/></svg>Create a new question...</button>
  <button class="task tight"><svg><use href="#firefox"/></svg>Library</button>
  <button class="pin vlc" aria-label="VLC media player"><svg viewBox="0 0 24 24"><path d="M3 17H21L23 23H1Z" fill="#e8731c"/><path d="M10 1H14L20 20C16 22 8 22 4 20Z" fill="#f08222"/><path d="M8.800 5.500H15.200L16.700 10C14 11 10 11 7.300 10ZM6.300 13.500C10 15 14 15 17.700 13.500L18.800 17C14 19 10 19 5.200 17Z" fill="#f2f2f2"/></svg></button>
  <button class="task tight"><svg viewBox="0 0 24 24"><path d="M0 5H14V11H20V24H0Z" fill="#1a86cf"/><path d="M1.500 6.500H6V11H1.500ZM7.500 6.500H12V11H7.500ZM1.500 12.500H6V17H1.500ZM7.500 12.500H12V17H7.500ZM13.500 12.500H18.500V17H13.500ZM1.500 18.500H6V23H1.500ZM7.500 18.500H12V23H7.500ZM13.500 18.500H18.500V23H13.500Z" fill="#48b8f2"/><path d="M19 1L23 5L19 9L15 5Z" fill="#1f8fda"/></svg>Registry Editor</button>
  <button class="task tight"><svg viewBox="0 0 24 24"><path d="M5 2H23L20 23H1Z" fill="#c4cdd2"/><path d="M5 3H20L18 22H1Z" fill="#a9d7ec"/><path d="M6 2V0M9 2V0M12 2V0M15 2V0M18 2V0M21 2V0" stroke="#ddd"/><path d="M20 4L22 5L20 23H18Z" fill="#8c7a53"/></svg>*Untitled - Notepad</button>
  <div class="tray">
    <button class="more" aria-label="Show hidden icons"><svg viewBox="0 0 18 10"><path d="M1 9L9 1L17 9" fill="none" stroke="#fff" stroke-width="1.500"/></svg></button>
    <time>5:30 AM</time>
    <button class="notes" aria-label="Notifications"><svg viewBox="0 0 24 24"><path d="M.7 .7H23.300V18.500H15L11.500 22.500L8 18.500H.7Z" fill="none" stroke="#fff" stroke-width="1.400"/></svg></button>
    <i></i>
  </div>
</footer>
</body>
</html>
```
FILE: styles.css
```css
* { box-sizing: border-box; margin: 0; padding: 0; }
body { min-height: 100vh; display: flex; flex-direction: column; background: #000; font: 17px/24px "Open Sans", "Noto Sans", sans-serif; color: #fff; }
button { font: inherit; color: inherit; background: none; border: 0; }
h1, h2 { font-size: inherit; font-weight: 400; }
svg { display: block; flex: none; overflow: visible; }
.defs { position: absolute; width: 0; height: 0; }
.i22 { width: 22px; height: 22px; }
.desktop { flex: 1; position: relative; overflow: hidden; }

/* File Explorer window */
.explorer { position: absolute; left: 1105px; top: 159px; width: 1704px; height: 1027px; display: flex; flex-direction: column; background: #1f1f1f; border: 1px solid #2e2e2e; border-top: 0; }
.titlebar { height: 45px; display: flex; background: #2d2d2d; }
.qat { width: 325px; display: flex; align-items: center; padding-left: 12px; }
.qsep { width: 2px; height: 24px; margin: 0 14px 0 5px; border: 1px solid #666; }
.qsep.last { margin: 0; }
.qdoc { width: 19px; height: 22px; margin-left: 12px; }
.qmenu { width: 10px; height: 9px; margin: 2px 15px 0 13px; }
.manage { width: 130px; margin-top: 6px; background: #ecec87; color: #222; text-align: center; font-size: 15px; line-height: 43px; }
.win-title { padding-left: 14px; line-height: 48px; color: #999; flex: 1; }
.win-controls { display: flex; color: #8b8b8b; }
.win-controls button { width: 70px; display: flex; align-items: center; justify-content: center; }
.win-controls svg { width: 15px; height: 15px; }

.ribbon-tabs { height: 34px; display: flex; background: #000; font-size: 15px; }
.ribbon-tabs button { line-height: 34px; }
.tab-file { width: 84px; background: #1266b2; }
.tab-home { width: 82px; background: #252525; }
.tab-share { width: 82px; }
.tab-view { width: 77px; }
.tab-tools { width: 130px; border: solid #202020; border-width: 0 1px; }
.ribbon-tabs .collapse { margin-left: auto; width: 40px; display: flex; align-items: center; justify-content: center; color: #bbb; }
.collapse svg { width: 18px; height: 10px; }
.ribbon-tabs .help { width: 22px; height: 22px; margin: 6px 5px 0 1px; border-radius: 50%; background: #1170c4; font-size: 17px; line-height: 22px; }

.ribbon { height: 139px; display: flex; background: #252525; border: solid #303030; border-width: 1px 0; font-size: 15px; }
.group { display: flex; flex-direction: column; position: relative; padding-top: 1px; }
.group::after { content: ""; position: absolute; right: 0; top: 3px; height: 108px; border-right: 1px solid #3d3d3d; }
.group h2 { text-align: center; line-height: 20px; color: #b8b8b8; }
.g-clip { width: 368px; }
.g-org { width: 276px; }
.g-new { width: 205px; }
.g-open { width: 182px; }
.g-select { width: 157px; }
.tools { height: 112px; display: flex; padding-left: 5px; }
.big { display: flex; flex-direction: column; align-items: center; padding-top: 12px; line-height: 21px; white-space: nowrap; }
.big > svg { width: 42px; height: 42px; margin-bottom: 7px; }
.big span { display: flex; align-items: center; height: 21px; }
.off { color: #999; }
.w96 { width: 97px; } .w56 { width: 56px; } .w68 { width: 68px; } .w62 { width: 62px; }
.w58 { width: 58px; } .w70 { width: 70px; } .w60 { width: 60px; } .w80 { width: 79px; }
.vsep { width: 2px; height: 92px; margin: 8px 5px 0; background: #555; }
.small-col { padding: 5px 0 0 3px; }
.small-col.inset { padding-left: 5px; }
.small { display: flex; align-items: center; height: 32px; gap: 5px; white-space: nowrap; }
.loose .small { height: 33px; }
.small > svg { width: 22px; height: 22px; }
.big svg.car, .small svg.car { width: 8px; height: 5px; margin: 0 0 6px 4px; }
.small svg.car { margin-left: 0; }
.big svg.car.solo { margin-left: 0; }

.address-row { height: 60px; display: flex; align-items: flex-start; padding: 5px 12px 0 18px; }
.nb { height: 48px; width: 20px; margin-right: 26px; display: flex; align-items: center; justify-content: center; }
.nb svg { width: 20px; height: 20px; }
.nb.rec { margin-right: 10px; margin-left: -9px; }
.nb.rec svg { width: 13px; height: 8px; }
.nb.up { margin-right: 8px; margin-left: 0; }
.address { flex: 1; height: 47px; display: flex; align-items: center; border: 2px solid #4d4d4d; padding-left: 4px; }
.crumb { width: 8px; height: 12px; margin: 0 13px 0 9px; }
.drop { margin-left: auto; width: 43px; height: 43px; display: flex; align-items: center; justify-content: center; color: #999; border-right: 1px solid #2a2a2a; }
.drop svg { width: 14px; height: 9px; }
.refresh { width: 45px; display: flex; justify-content: center; }
.refresh svg { width: 18px; height: 18px; }
.search { width: 328px; height: 47px; margin-left: 12px; border: 2px solid #4d4d4d; display: flex; align-items: center; padding-left: 20px; gap: 20px; }
.search svg { width: 20px; height: 20px; }
.search input { width: 250px; background: none; border: 0; color: #fff; font: inherit; }
.search input::placeholder { color: #7c7c7c; opacity: 1; }

.panes { flex: 1; min-height: 0; display: flex; }
.nav-pane { width: 269px; display: flex; overflow: hidden; border-right: 2px solid #2f2f2f; }
.tree { list-style: none; flex: 1; padding: 12px 1px 0; white-space: nowrap; overflow: hidden; }
.tree li { height: 34px; margin-bottom: 2px; display: flex; align-items: center; gap: 6px; }
.tree svg { width: 22px; height: 22px; }
.tree .l0 { padding-left: 36px; }
.tree .l1 { padding-left: 48px; }
.tree .l2 { padding-left: 60px; }
.tree .current { background: #363636; }
.scroll { flex: none; width: 26px; display: flex; flex-direction: column; align-items: center; background: #1b1b1b; }
.scroll svg { width: 12px; height: 9px; margin: 10px 0; }
.scroll i { width: 24px; background: #4d4d4d; }
.scroll .dn { margin: auto 0 8px; }
.nav-scroll i { height: 372px; margin-top: 16px; }
.list-scroll { margin-left: auto; }
.list-scroll i { height: 602px; }
.list-pane { flex: 1; display: flex; overflow: hidden; background: #252525; padding-left: 24px; }
.files { table-layout: fixed; width: 1092px; border-collapse: collapse; align-self: flex-start; white-space: nowrap; }
.c-name { width: 248px; } .c-mod { width: 243px; } .c-type { width: 204px; } .c-size { width: 135px; } .c-created { width: 262px; }
.files th { height: 46px; vertical-align: top; font-weight: 400; text-align: left; color: #ddd; }
.files th span { display: block; height: 41px; line-height: 41px; padding-left: 10px; border-right: 1px solid #555; position: relative; }
.files th:first-child span { padding-left: 5px; }
.files th .wide { margin-right: -6px; }
.sort { position: absolute; left: 115px; top: 1px; width: 12px; height: 7px; color: #999; }
.files td { height: 32px; padding-left: 10px; color: #ddd; }
.files td:first-child { padding-left: 6px; color: #fff; display: flex; align-items: center; gap: 7px; }
.files td svg { width: 22px; height: 22px; }
.files td .faded { opacity: .5; }
.selected { background: #363636; }

.status { height: 36px; display: flex; align-items: center; background: #333; padding-left: 22px; color: #ccc; }
.status i { width: 2px; height: 17px; margin: 0 16px; background: #fff; }
.views { margin-left: auto; display: flex; align-items: center; gap: 4px; padding-right: 12px; }
.views button { height: 36px; display: flex; align-items: center; justify-content: center; }
.views .on { width: 32px; background: #636363; border: 1px solid #8a8a8a; }
.views .on svg { width: 32px; height: 34px; }

/* Property sheets */
.dialog { position: absolute; width: 541px; background: #f0f0f0; color: #000; font: 16px/20px "Liberation Sans", Arial, sans-serif; }
.d1 { left: 463px; top: 257px; }
.d2 { left: 456px; top: 1016px; }
.d3 { left: 2938px; top: 358px; }
.d4 { left: 2932px; top: 1142px; }
.dialog header { height: 44px; display: flex; align-items: center; gap: 4px; padding: 0 17px 0 14px; background: #fff; color: #999; font-family: "Open Sans", "Noto Sans", sans-serif; font-size: 17px; }
.dialog.active header { color: #000; }
.dialog header svg { width: 22px; height: 22px; }
.x { margin-left: auto; }
.dialog .x svg { width: 15px; height: 15px; }
.tabs { display: flex; align-items: flex-end; height: 39px; padding-left: 9px; }
.tabs button { height: 25px; border: 1px solid #d9d9d9; border-width: 1px 1px 0 0; line-height: 28px; overflow: hidden; }
.tabs .on { width: 81px; height: 30px; margin-bottom: -1px; border-left-width: 1px; background: #fff; line-height: 28px; position: relative; }
.t-sh { width: 70px; } .t-se { width: 76px; } .t-pv { width: 144px; } .t-cu { width: 91px; }
.page { margin: 0 11px 0 9px; min-height: 592px; background: #fff; border: 1px solid #d9d9d9; padding: 0 22px 0 21px; }
.name-row { display: flex; height: 83px; padding: 25px 0 0 2px; border-bottom: 1px solid #a0a0a0; }
.name-row svg { width: 42px; height: 42px; }
.name-row input { flex: 1; height: 35px; margin: 5px -3px 0 66px; border: 1px solid #7a7a7a; padding: 0 3px 5px; font: inherit; }
dl { display: grid; grid-template-columns: 110px 1fr; line-height: 40px; padding: 10px 0 9px; border-bottom: 1px solid #a0a0a0; }
dl + dl { padding: 9px 0; }
.attrs { display: grid; grid-template-columns: 110px 1fr; padding-top: 10px; }
.attrs > span { line-height: 40px; }
.attrs > div { padding-top: 4px; }
.attrs label { display: flex; align-items: center; gap: 4px; height: 35px; }
.attrs input { appearance: none; width: 20px; height: 20px; border: 1px solid #333; background: #fff; }
.attrs .partial { background: linear-gradient(#333, #333) center / 10px 10px no-repeat; }
.hid { display: flex; justify-content: space-between; }
.btn { width: 111px; height: 33px; border: 1px solid #adadad; background: #e1e1e1; line-height: 31px; }
.adv { width: 156px; margin-top: 1px; }
.btn:disabled { background: #ccc; border-color: #bfbfbf; color: #8a8a8a; }
.btn.default { border: 2px solid #0078d7; line-height: 29px; }
.dialog footer { display: flex; justify-content: flex-end; gap: 11px; padding: 13px 9px 11px; }

/* Taskbar */
.taskbar { height: 46px; display: flex; background: #13242f; white-space: nowrap; }
.pin { width: 58px; padding: 0 17px; display: flex; align-items: center; }
.pin svg { width: 24px; height: 24px; }
.pin:first-child { width: 53px; padding-left: 14px; }
.pin:nth-child(4) { margin-right: 6px; padding-left: 15px; }
.task { width: 228px; margin-right: 12px; display: flex; align-items: center; gap: 3px; padding: 2px 0 0 8px; border-bottom: 3px solid #a5d3fa; }
.task svg { width: 22px; height: 22px; }
.task.current { width: 240px; margin: 0 6px 0 -6px; padding-left: 14px; background: #124b7d; }
.task.tight { padding-left: 6px; margin: 0 10px 0 2px; }
.task.tight svg { width: 24px; height: 24px; }
.vlc { padding: 0 12px; width: 60px; }
.tray { margin-left: auto; display: flex; align-items: center; }
.more svg { width: 18px; height: 10px; }
.tray time { margin: 0 33px 0 24px; line-height: 46px; }
.notes svg { width: 24px; height: 24px; }
.tray i { width: 2px; height: 46px; margin: 0 5px 0 31px; background: #6f7d84; }
```
